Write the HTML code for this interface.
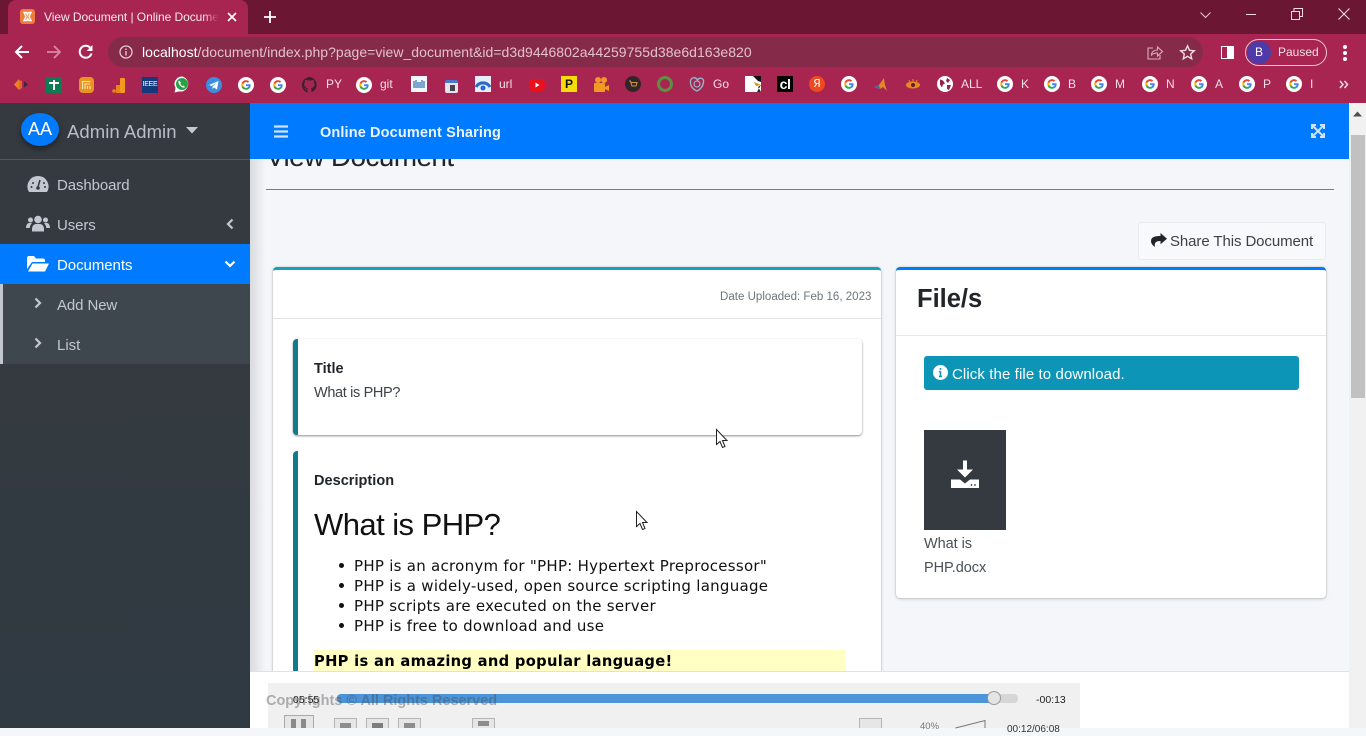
<!DOCTYPE html>
<html><head><meta charset="utf-8"><title>View Document | Online Document Sharing</title>
<style>
html,body{margin:0;padding:0;width:1366px;height:728px;overflow:hidden;background:#f4f6f9;font-family:"Liberation Sans",sans-serif;}
.a{position:absolute;white-space:nowrap;}
svg{position:absolute;overflow:visible;}
.bm{color:#f3dfe6;font-size:12px;line-height:14px;top:77px;}
.nav{color:#c2c7d0;font-size:15px;line-height:18px;}
</style></head><body>
<svg width="0" height="0" style="position:absolute"><defs>
<symbol id="g" viewBox="0 0 16 16"><circle cx="8" cy="8" r="8" fill="#fff"/><path d="M12.6 8.2c0-.4 0-.7-.1-1H8v1.9h2.6a2.3 2.3 0 0 1-1 1.500l1.500 1.200a4.700 4.700 0 0 0 1.500-3.600z" fill="#4285f4"/><path d="M8 12.800c1.300 0 2.300-.4 3.100-1.200L9.600 10.400a2.900 2.900 0 0 1-4.300-1.500H3.700v1.200A4.800 4.800 0 0 0 8 12.800z" fill="#34a853"/><path d="M5.300 8.900a2.900 2.900 0 0 1 0-1.800V5.900H3.700a4.800 4.800 0 0 0 0 4.200z" fill="#fbbc05"/><path d="M8 5.100c.7 0 1.300.2 1.800.7l1.400-1.400A4.800 4.800 0 0 0 3.700 5.900l1.600 1.200A2.900 2.900 0 0 1 8 5.100z" fill="#ea4335"/></symbol>
</defs></svg>

<!-- browser chrome -->
<div class="a" style="left:0;top:0;width:1366px;height:34px;background:#6b1733"></div>
<div class="a" style="left:0;top:34px;width:1366px;height:69px;background:#a92551"></div>
<div class="a" style="left:8px;top:0;width:240px;height:34px;background:#a92551;border-radius:8px 8px 0 0"></div>
<div class="a" style="left:20px;top:9px;width:15px;height:15px;background:#ec7d3b;border-radius:3px"></div>
<svg style="left:20px;top:9px" width="15" height="15"><path d="M4 3.500h2.500L7.500 5.500 8.500 3.500H11L9 7.500 11 11.500H8.500L7.500 9.500 6.500 11.500H4L6 7.500z" fill="none" stroke="#fff" stroke-width="1.400"/></svg>
<div class="a" style="left:44px;top:9px;width:176px;height:16px;overflow:hidden;color:#f6e6ec;font-size:12px;line-height:16px;letter-spacing:-.05px">View Document | Online Document Sharing</div>
<div class="a" style="left:204px;top:9px;width:18px;height:16px;background:linear-gradient(90deg,rgba(169,37,81,0),#a92551 80%)"></div>
<svg style="left:227px;top:12px" width="10" height="10"><path d="M1 1l8 8M9 1l-8 8" stroke="#fff" stroke-width="1.600"/></svg>
<svg style="left:264px;top:11px" width="12" height="12"><path d="M6 0v12M0 6h12" stroke="#fff" stroke-width="1.800"/></svg>
<svg style="left:1200px;top:12px" width="11" height="7"><path d="M.5 .5l5 5 5-5" fill="none" stroke="#e6c7d2" stroke-width="1"/></svg>
<div class="a" style="left:1246px;top:14px;width:10px;height:1px;background:#f0dbe2"></div>
<svg style="left:1291px;top:8px" width="12" height="12"><path d="M.5 3.500h8v8h-8zM3 3.500V.5h8.500v8H8.500" fill="none" stroke="#f0dbe2"/></svg>
<svg style="left:1338px;top:8px" width="12" height="12"><path d="M.5 .5l11 11M11.500 .5l-11 11" stroke="#f0dbe2" stroke-width="1.100"/></svg>

<svg style="left:14px;top:44px" width="16" height="16"><path d="M15 8H2M8 2L2 8l6 6" fill="none" stroke="#fff" stroke-width="2"/></svg>
<svg style="left:46px;top:44px" width="16" height="16"><path d="M1 8h13M8 2l6 6-6 6" fill="none" stroke="#d68aa3" stroke-width="1.800"/></svg>
<svg style="left:78px;top:44px" width="16" height="16"><path d="M13.500 9.500A6 6 0 1 1 12 3.500" fill="none" stroke="#fff" stroke-width="2"/><path d="M14.500 1v6h-6z" fill="#fff"/></svg>
<div class="a" style="left:108px;top:37px;width:1095px;height:30px;border-radius:15px;background:#852a49"></div>
<svg style="left:119px;top:45px" width="14" height="14"><circle cx="7" cy="7" r="6" fill="none" stroke="#e6c7d2" stroke-width="1.300"/><path d="M7 6v4.500M7 3.500v1.500" stroke="#e6c7d2" stroke-width="1.400"/></svg>
<div class="a" style="left:142px;top:44px;font-size:14px;line-height:16px;color:#e3c0cc;letter-spacing:.03px"><span style="color:#fff">localhost</span>/document/index.php?page=view_document&amp;id=d3d9446802a44259755d38e6d163e820</div>
<svg style="left:1147px;top:45px" width="16" height="15"><path d="M6 3H1v11h12v-4" fill="none" stroke="#dcaebd" stroke-width="1.100"/><path d="M4.500 10c0-3.500 3-5 6-5V2l5 4.500-5 4.500V8c-2.500 0-4.500.5-6 2z" fill="none" stroke="#dcaebd" stroke-width="1.100"/></svg>
<svg style="left:1180px;top:45px" width="15" height="15"><path d="M7.500 .8l2 4.500 4.800.5-3.600 3.200 1 4.800-4.200-2.500-4.200 2.500 1-4.800L.7 5.800l4.800-.5z" fill="none" stroke="#f0dbe2" stroke-width="1.400"/></svg>
<div class="a" style="left:1221px;top:46px;width:13px;height:13px;background:#fff"></div>
<div class="a" style="left:1222px;top:47px;width:5px;height:11px;background:#a92551"></div>
<div class="a" style="left:1245px;top:39px;width:80px;height:25px;border:1px solid #e9c8d3;border-radius:14px"></div>
<div class="a" style="left:1247px;top:41px;width:24px;height:23px;border-radius:12px;background:#4f3aa8;color:#fff;font-size:12px;line-height:23px;text-align:center">B</div>
<div class="a" style="left:1278px;top:44px;color:#f3dfe6;font-size:12px;line-height:16px">Paused</div>
<div class="a" style="left:1343px;top:45px;width:4px;height:4px;background:#fff;border-radius:50%;box-shadow:0 6px 0 #fff,0 12px 0 #fff"></div>

<!-- bookmarks -->
<svg style="left:14px;top:78px" width="16" height="13"><path d="M0 6.500L5 1v11z" fill="#ee7f2d"/><path d="M5 2l3 1v7l-3 2z" fill="#e26a24"/><path d="M10 3l4 3.500-4 3z" fill="#3b2a3a"/></svg>
<div class="a" style="left:46px;top:77px;width:16px;height:16px;background:#0f7b52"></div>
<svg style="left:46px;top:77px" width="16" height="16"><path d="M8 3v10M3 6h10" stroke="#fff" stroke-width="2"/></svg>
<div class="a" style="left:79px;top:77px;width:15px;height:16px;background:#e8941f;border-radius:4px"></div>
<svg style="left:79px;top:77px" width="15" height="16"><path d="M3.500 12V4.500h8M6 12V7h5M8.500 12V9M11 12V9" fill="none" stroke="#ffe3b0" stroke-width="1.100"/></svg>
<svg style="left:112px;top:77px" width="14" height="16"><rect x="8" y="1" width="5" height="15" rx="1" fill="#f39a1e"/><rect x="4" y="8" width="4" height="8" fill="#e8841c"/><circle cx="2" cy="14" r="1.800" fill="#e8841c"/></svg>
<div class="a" style="left:142px;top:77px;width:16px;height:16px;background:#123a7c;color:#fff;font-size:7px;line-height:16px;text-align:center;letter-spacing:-.3px">IEEE</div>
<svg style="left:174px;top:76px" width="16" height="17"><path d="M8 .5a7.500 7.500 0 0 0-6.400 11.400L.5 16.500l4.700-1.100A7.500 7.500 0 1 0 8 .5z" fill="#fff"/><circle cx="8" cy="8" r="6" fill="#25a244"/><path d="M5 4.500c-1 1 -.8 3 1 5s4 2.800 5 1.500l-1.500-1.500-1 .5c-1-.5-1.700-1.300-2.200-2.300l.7-1z" fill="#fff"/></svg>
<svg style="left:206px;top:77px" width="16" height="16"><circle cx="8" cy="8" r="8" fill="#3b8de0"/><path d="M3 8l9.500-4-1.500 8.500-3-2-1.500 1.500v-2.500l4-3.500-5 3z" fill="#fff"/></svg>
<svg style="left:238px;top:77px" width="16" height="16"><use href="#g"/></svg>
<svg style="left:270px;top:77px" width="16" height="16"><use href="#g"/></svg>
<svg style="left:302px;top:77px" width="16" height="16"><path d="M8 0a8 8 0 0 0-2.500 15.600V13c-2 .4-2.500-1-2.500-1-.4-1-1-1.200-1-1.200 1-.5 1.700.9 1.700.9.800 1.300 2 1 1.800.6 0-.6.300-1 .5-1.200-2-.2-3.700-1-3.700-4 0-.9.300-1.600.8-2.200-.1-.2-.4-1 .1-2.100 0 0 .7-.2 2.200.8a7.500 7.500 0 0 1 4 0c1.500-1 2.200-.8 2.200-.8.500 1.100.2 1.900.1 2.100.5.600.8 1.300.8 2.200 0 3-1.800 3.800-3.700 4 .3.300.6.700.6 1.500v2.800A8 8 0 0 0 8 0z" fill="#3d2030"/></svg>
<div class="a bm" style="left:326px">PY</div>
<svg style="left:356px;top:77px" width="16" height="16"><use href="#g"/></svg>
<div class="a bm" style="left:380px">git</div>
<div class="a" style="left:411px;top:76px;width:16px;height:16px;background:#f4f8fc"></div>
<svg style="left:411px;top:76px" width="16" height="16"><path d="M3 5v7M5 4v8M7 6v6M9 6v6M11 4v8M13 5v7" stroke="#2d6fb5" stroke-width="1.200"/></svg>
<div class="a" style="left:445px;top:80px;width:13px;height:13px;background:#e8e3e8;border-radius:2px;border-top:3px solid #4a79c9;box-sizing:border-box"></div>
<div class="a" style="left:450px;top:85px;width:5px;height:6px;background:#4a4450"></div>
<svg style="left:475px;top:76px" width="16" height="17"><rect width="16" height="16" fill="#e6eef8"/><path d="M1 11a8 8 0 0 1 14 0" fill="none" stroke="#2969c9" stroke-width="3"/><circle cx="8" cy="12" r="2.500" fill="#2969c9"/></svg>
<div class="a bm" style="left:499px">url</div>
<div class="a" style="left:529px;top:79px;width:16px;height:12px;background:#e8121d;border-radius:4px"></div>
<svg style="left:529px;top:79px" width="16" height="12"><path d="M6.500 3.500v5l4-2.500z" fill="#fff"/></svg>
<div class="a" style="left:561px;top:76px;width:16px;height:16px;background:#f6dc0a;color:#111;font-size:12px;font-weight:bold;line-height:16px;text-align:center">P</div>
<svg style="left:593px;top:76px" width="16" height="17"><circle cx="5" cy="4" r="3" fill="#f09a24"/><circle cx="11" cy="4" r="3" fill="#f09a24"/><rect x="1" y="7" width="11" height="9" rx="1" fill="#f09a24"/><path d="M12 11l4-2v6l-4-2z" fill="#f09a24"/></svg>
<svg style="left:625px;top:76px" width="16" height="16"><circle cx="8" cy="8" r="8" fill="#33232b"/><path d="M4 5h1.500l1.500 5h4l1-3.500H6" fill="none" stroke="#c59a3d" stroke-width="1.100"/></svg>
<svg style="left:657px;top:76px" width="16" height="16"><circle cx="8" cy="8" r="6.500" fill="none" stroke="#5e8f43" stroke-width="3"/></svg>
<svg style="left:689px;top:76px" width="16" height="16"><path d="M8 15C3 13 1 9 1.500 5 2 2 6 0 8.500 4c2-3 6.500-2 6 2-.3 4-3 7.500-6.500 9z" fill="none" stroke="#90b6c9" stroke-width="1.400"/><circle cx="8" cy="8" r="3" fill="none" stroke="#90b6c9" stroke-width="1.200"/></svg>
<div class="a bm" style="left:713px">Go</div>
<div class="a" style="left:745px;top:76px;width:16px;height:16px;background:#fff"></div>
<svg style="left:745px;top:76px" width="16" height="16"><path d="M8 0h8v6l-3-1-2-2z" fill="#111"/><path d="M16 9l-3 2 3 5h-4z" fill="#222"/><path d="M9 6l7 3-5 1z" fill="#d98a1f"/></svg>
<div class="a" style="left:777px;top:76px;width:16px;height:16px;background:#000;color:#fff;font-size:14px;font-weight:bold;line-height:16px;text-align:center;letter-spacing:-.5px">cl</div>
<div class="a" style="left:809px;top:76px;width:16px;height:16px;background:#f0481f;border-radius:50%;color:#fff;font-size:11px;line-height:16px;text-align:center;font-family:'DejaVu Sans',sans-serif">Я</div>
<svg style="left:841px;top:76px" width="16" height="16"><use href="#g"/></svg>
<svg style="left:874px;top:78px" width="14" height="14"><path d="M0 9l5-2 5-7 1 7 2 6-4-4-3 2z" fill="#e3872a"/><path d="M0 9l5-2 1 4z" fill="#3d6ca8"/></svg>
<svg style="left:905px;top:76px" width="16" height="16"><ellipse cx="8" cy="9" rx="7" ry="3.500" fill="#e8891f"/><circle cx="8" cy="9" r="2" fill="#5c1e2c"/><path d="M4 4l1 2M8 3v3M12 4l-1 2" stroke="#e8891f" stroke-width="1"/></svg>
<svg style="left:937px;top:76px" width="16" height="16"><circle cx="8" cy="8" r="8" fill="#fff"/><path d="M3 3.500l3 1 2 3-2 1-1 3-2-3zM10 2l3 2-2 3-2-2zM10 9l4 0-2 5-2-1z" fill="#8e2647"/></svg>
<div class="a bm" style="left:961px">ALL</div>
<svg style="left:997px;top:76px" width="16" height="16"><use href="#g"/></svg><div class="a bm" style="left:1021px">K</div>
<svg style="left:1044px;top:76px" width="16" height="16"><use href="#g"/></svg><div class="a bm" style="left:1068px">B</div>
<svg style="left:1091px;top:76px" width="16" height="16"><use href="#g"/></svg><div class="a bm" style="left:1115px">M</div>
<svg style="left:1142px;top:76px" width="16" height="16"><use href="#g"/></svg><div class="a bm" style="left:1166px">N</div>
<svg style="left:1191px;top:76px" width="16" height="16"><use href="#g"/></svg><div class="a bm" style="left:1215px">A</div>
<svg style="left:1239px;top:76px" width="16" height="16"><use href="#g"/></svg><div class="a bm" style="left:1263px">P</div>
<svg style="left:1286px;top:76px" width="16" height="16"><use href="#g"/></svg><div class="a bm" style="left:1310px">I</div>
<svg style="left:1339px;top:80px" width="10" height="9"><path d="M1 1l3 3.500-3 3.500M5.500 1l3 3.500-3 3.500" fill="none" stroke="#f3dfe6" stroke-width="1.500"/></svg>

<!-- content -->
<div class="a" style="left:250px;top:159px;width:1099px;height:569px;background:#f4f6f9"></div>
<div class="a" style="left:250px;top:103px;width:16px;height:625px;background:linear-gradient(90deg,#d9dbde,#f4f6f9)"></div>
<div class="a" style="left:266px;top:140px;font-size:28px;line-height:33px;color:#212529;letter-spacing:-.62px">View Document</div>
<div class="a" style="left:266px;top:189px;width:1068px;height:1px;background:#17a2b8"></div>

<div class="a" style="left:1138px;top:222px;width:186px;height:36px;background:#f8f9fa;border:1px solid #e9ecef;border-radius:3px"></div>
<svg style="left:1151px;top:233px" width="16" height="15" viewBox="0 0 16 15"><path d="M9.500 0L16 5.700 9.500 11.300V8C5 8 3 9.500 4 14 1.500 12.500 0 10.200 0 8 0 4 4 3 9.500 3z" fill="#212529"/></svg>
<div class="a" style="left:1170px;top:233px;font-size:15px;line-height:18px;color:#3c4247;letter-spacing:-.09px">Share This Document</div>

<!-- left card -->
<div class="a" style="left:273px;top:267px;width:608px;height:440px;background:#fff;border-top:3px solid #17a2b8;border-radius:4px 4px 0 0;box-shadow:0 0 1px rgba(0,0,0,.3),0 1px 3px rgba(0,0,0,.2);box-sizing:border-box"></div>
<div class="a" style="left:273px;top:318px;width:608px;height:1px;background:#e2e4e7"></div>
<div class="a" style="left:720px;top:290px;font-size:11.500px;line-height:14px;color:#6c757d;letter-spacing:.02px">Date Uploaded: Feb 16, 2023</div>

<div class="a" style="left:293px;top:339px;width:569px;height:96px;background:#fff;border-left:5px solid #117a8b;border-radius:4px;box-shadow:0 1px 2px rgba(0,0,0,.45);box-sizing:border-box"></div>
<div class="a" style="left:314px;top:360px;font-size:14.500px;font-weight:bold;line-height:18px;color:#212529">Title</div>
<div class="a" style="left:314px;top:384px;font-size:14.500px;line-height:18px;color:#3c4247;letter-spacing:-.35px">What is PHP?</div>

<div class="a" style="left:293px;top:451px;width:569px;height:277px;background:#fff;border-left:5px solid #117a8b;border-radius:4px 4px 0 0;box-sizing:border-box"></div>
<div class="a" style="left:314px;top:472px;font-size:14.500px;font-weight:bold;line-height:18px;color:#212529;letter-spacing:.03px">Description</div>
<div class="a" style="left:314px;top:507px;font-size:31px;line-height:36px;color:#111;letter-spacing:-.55px">What is PHP?</div>
<div class="a" style="left:339px;top:563px;width:5px;height:5px;border-radius:50%;background:#111;box-shadow:0 20px 0 #111,0 40px 0 #111,0 60px 0 #111"></div>
<div class="a" style="left:354px;top:556px;font-family:'DejaVu Sans',sans-serif;font-size:15px;line-height:20px;color:#111;letter-spacing:.27px">PHP is an acronym for "PHP: Hypertext Preprocessor"<br>PHP is a widely-used, open source scripting language<br>PHP scripts are executed on the server<br>PHP is free to download and use</div>
<div class="a" style="left:314px;top:650px;width:532px;height:22px;background:#ffffc4"></div>
<div class="a" style="left:314px;top:652px;font-family:'DejaVu Sans',sans-serif;font-weight:bold;font-size:14.700px;line-height:20px;color:#000;letter-spacing:.31px">PHP is an amazing and popular language!</div>

<!-- right card -->
<div class="a" style="left:896px;top:267px;width:430px;height:331px;background:#fff;border-top:3px solid #007bff;border-radius:4px;box-shadow:0 0 1px rgba(0,0,0,.3),0 1px 3px rgba(0,0,0,.2);box-sizing:border-box"></div>
<div class="a" style="left:917px;top:284px;font-size:25.500px;font-weight:bold;line-height:30px;color:#212529">File/s</div>
<div class="a" style="left:896px;top:335px;width:430px;height:1px;background:#e6e8ea"></div>
<div class="a" style="left:924px;top:356px;width:375px;height:34px;background:#0c95b7;border-radius:3px"></div>
<svg style="left:933px;top:365px" width="15" height="15"><circle cx="7.500" cy="7.500" r="7.500" fill="#fff"/><path d="M7.500 6.500v5M6 6.500h1.500M6 11.500h3M7.500 3v1.800" stroke="#0c95b7" stroke-width="1.600" fill="none"/></svg>
<div class="a" style="left:952px;top:365px;font-size:15px;line-height:19px;color:#fff;letter-spacing:.1px">Click the file to download.</div>
<div class="a" style="left:924px;top:430px;width:82px;height:100px;background:#343a40"></div>
<svg style="left:950px;top:460px" width="30" height="30" viewBox="0 0 30 30"><path d="M13 .500h4v9h6l-8 8-8-8h6z" fill="#fff"/><path d="M1 19.500h9l5 4 5-4h9v8.500H1z" fill="#fff"/><circle cx="21.500" cy="25" r=".9" fill="#343a40"/><circle cx="25" cy="25" r=".9" fill="#343a40"/></svg>
<div class="a" style="left:924px;top:532px;font-size:14.500px;line-height:24px;color:#4a5056;letter-spacing:-.05px">What is<br>PHP.docx</div>

<!-- cursors -->
<svg style="left:716px;top:429px" width="12" height="20"><path d="M.5 .5v15l3.500-3 2.500 6 2.500-1-2.500-6h4.500z" fill="#fff" stroke="#222" stroke-width="1"/></svg>
<svg style="left:636px;top:511px" width="12" height="20"><path d="M.5 .5v15l3.500-3 2.500 6 2.500-1-2.500-6h4.500z" fill="#fff" stroke="#222" stroke-width="1"/></svg>

<!-- footer & player -->
<div class="a" style="left:250px;top:671px;width:1099px;height:57px;background:#fff;border-top:1px solid #dee2e6;box-sizing:border-box"></div>
<div class="a" style="left:268px;top:683px;width:812px;height:45px;background:#f0f0f0"></div>
<div class="a" style="left:337px;top:694px;width:681px;height:9px;background:#d6d6d6;border-radius:4px"></div>
<div class="a" style="left:337px;top:694px;width:657px;height:9px;background:#4b94d8;border-radius:4px 0 0 4px"></div>
<div class="a" style="left:987px;top:691px;width:12px;height:12px;background:#e4e4e4;border:1px solid #9a9a9a;border-radius:50%"></div>
<div class="a" style="left:266px;top:693px;font-size:14.500px;font-weight:bold;line-height:16px;color:rgba(70,75,80,.42);letter-spacing:-.02px">Copyrights © All Rights Reserved</div>
<div class="a" style="left:292px;top:693px;font-size:10.500px;line-height:14px;color:#222;padding:0 1px">05:55</div>
<div class="a" style="left:1036px;top:693px;font-size:10.500px;line-height:14px;color:#222">-00:13</div>
<div class="a" style="left:284px;top:715px;width:30px;height:13px;background:#e6e6e6;border:1px solid #a9a9a9;border-bottom:0;box-sizing:border-box"></div>
<div class="a" style="left:291px;top:719px;width:5px;height:9px;background:#8a8a8a"></div><div class="a" style="left:301px;top:719px;width:5px;height:9px;background:#8a8a8a"></div>
<div class="a" style="left:334px;top:718px;width:23px;height:10px;background:#e6e6e6;border:1px solid #b5b5b5;border-bottom:0;box-sizing:border-box"></div>
<div class="a" style="left:366px;top:718px;width:23px;height:10px;background:#e6e6e6;border:1px solid #b5b5b5;border-bottom:0;box-sizing:border-box"></div>
<div class="a" style="left:398px;top:718px;width:23px;height:10px;background:#e6e6e6;border:1px solid #b5b5b5;border-bottom:0;box-sizing:border-box"></div>
<div class="a" style="left:472px;top:718px;width:23px;height:10px;background:#e6e6e6;border:1px solid #b5b5b5;border-bottom:0;box-sizing:border-box"></div>
<div class="a" style="left:340px;top:723px;width:11px;height:5px;background:#8d8d8d"></div>
<div class="a" style="left:372px;top:723px;width:11px;height:5px;background:#7d7d7d"></div>
<div class="a" style="left:404px;top:723px;width:11px;height:5px;background:#8d8d8d"></div>
<div class="a" style="left:478px;top:721px;width:11px;height:5px;background:#8d8d8d"></div>
<div class="a" style="left:859px;top:718px;width:23px;height:10px;background:#e6e6e6;border:1px solid #b5b5b5;border-bottom:0;box-sizing:border-box"></div>
<div class="a" style="left:920px;top:721px;font-size:9.500px;line-height:12px;color:#777">40%</div>
<svg style="left:955px;top:720px" width="32" height="8"><path d="M.5 8L30 .5V8" fill="none" stroke="#777"/></svg>
<div class="a" style="left:1007px;top:724px;font-size:10px;line-height:12px;color:#333">00:12/06:08</div>

<!-- sidebar -->
<div class="a" style="left:0;top:103px;width:250px;height:625px;background:linear-gradient(180deg,#343a40 0,#343a40 260px,#303a42 100%)"></div>
<div class="a" style="left:0;top:159px;width:250px;height:1px;background:#4f5962"></div>
<div class="a" style="left:21px;top:113px;width:38px;height:33px;background:#007bff;border-radius:50%;box-shadow:0 3px 6px rgba(0,0,0,.4);color:#fff;font-size:18px;line-height:33px;text-align:center">AA</div>
<div class="a" style="left:67px;top:121px;color:#b9bec6;font-size:18.500px;line-height:22px;font-weight:normal;letter-spacing:.05px">Admin Admin</div>
<svg style="left:186px;top:127px" width="12" height="7"><path d="M0 0h12L6 6.500z" fill="#c2c7d0"/></svg>

<svg style="left:27px;top:175px" width="22" height="18" viewBox="0 0 22 18"><path d="M11 1a10.500 10.500 0 0 0-9 16h18a10.500 10.500 0 0 0-9-16z" fill="#c2c7d0"/><path d="M11 12l2-7" stroke="#343a40" stroke-width="1.500"/><circle cx="11" cy="13" r="1.800" fill="#343a40"/><circle cx="6" cy="8" r="1" fill="#343a40"/><circle cx="4.500" cy="12" r="1" fill="#343a40"/><circle cx="17" cy="8" r="1" fill="#343a40"/><circle cx="18" cy="12" r="1" fill="#343a40"/></svg>
<div class="a nav" style="left:57px;top:177px;letter-spacing:-.1px">Dashboard</div>

<svg style="left:26px;top:215px" width="24" height="17" viewBox="0 0 24 17"><circle cx="12" cy="4.500" r="3.800" fill="#c2c7d0"/><circle cx="4.500" cy="5" r="2.500" fill="#c2c7d0"/><circle cx="19.500" cy="5" r="2.500" fill="#c2c7d0"/><path d="M6 16.500v-2.500c0-3 2-5 4-5h4c2 0 4 2 4 5v2.500z" fill="#c2c7d0"/><path d="M0 13c0-3 1.500-5 3-5h3c-1 1-2 2.500-2.300 5zM24 13c0-3-1.500-5-3-5h-3c1 1 2 2.500 2.300 5z" fill="#c2c7d0"/></svg>
<div class="a nav" style="left:57px;top:217px;letter-spacing:-.1px">Users</div>
<svg style="left:226px;top:218px" width="8" height="12"><path d="M6.500 1.500L2 6l4.500 4.500" fill="none" stroke="#c2c7d0" stroke-width="2.200"/></svg>

<div class="a" style="left:0;top:244px;width:250px;height:40px;background:#007bff"></div>
<svg style="left:27px;top:256px" width="22" height="16" viewBox="0 0 22 16"><path d="M0 2a2 2 0 0 1 2-2h5l2 2.500h7a2 2 0 0 1 2 2V6H5L0 13z" fill="#fff"/><path d="M5.500 7.500H22l-4 8H1z" fill="#fff"/></svg>
<div class="a nav" style="left:57px;top:257px;color:#fff;letter-spacing:-.05px">Documents</div>
<svg style="left:224px;top:260px" width="12" height="8"><path d="M1.500 1.500L6 6l4.500-4.500" fill="none" stroke="#fff" stroke-width="2.200"/></svg>

<div class="a" style="left:0;top:284px;width:250px;height:80px;background:#3f474e"></div>
<div class="a" style="left:0;top:284px;width:3px;height:80px;background:#c2c7d0"></div>
<svg style="left:34px;top:297px" width="8" height="12"><path d="M1.500 1.500L6 6l-4.500 4.500" fill="none" stroke="#c2c7d0" stroke-width="2.200"/></svg>
<div class="a nav" style="left:57px;top:297px;letter-spacing:-.1px">Add New</div>
<svg style="left:34px;top:337px" width="8" height="12"><path d="M1.500 1.500L6 6l-4.500 4.500" fill="none" stroke="#c2c7d0" stroke-width="2.200"/></svg>
<div class="a nav" style="left:57px;top:337px">List</div>

<!-- navbar -->
<div class="a" style="left:250px;top:103px;width:1099px;height:56px;background:#007bff"></div>
<svg style="left:274px;top:125px" width="14" height="13"><path d="M0 1.500h14M0 6.500h14M0 11.500h14" stroke="#cfe3ff" stroke-width="2.200"/></svg>
<div class="a" style="left:320px;top:124px;color:#eaf3ff;font-size:14.500px;font-weight:bold;line-height:18px;letter-spacing:.13px">Online Document Sharing</div>
<svg style="left:1311px;top:124px" width="14" height="14"><path d="M1 5V1h4M9 1h4v4M13 9v4H9M5 13H1V9" fill="none" stroke="#cfe3ff" stroke-width="2"/><path d="M2 2l10 10M12 2L2 12" stroke="#cfe3ff" stroke-width="2"/></svg>

<!-- scrollbar -->
<div class="a" style="left:1349px;top:103px;width:17px;height:625px;background:#f1f1f1"></div>
<svg style="left:1353px;top:111px" width="9" height="6"><path d="M0 5.500L4.500 .5 9 5.500z" fill="#505050"/></svg>
<div class="a" style="left:1351px;top:135px;width:14px;height:263px;background:#c1c1c1"></div>
</body></html>
